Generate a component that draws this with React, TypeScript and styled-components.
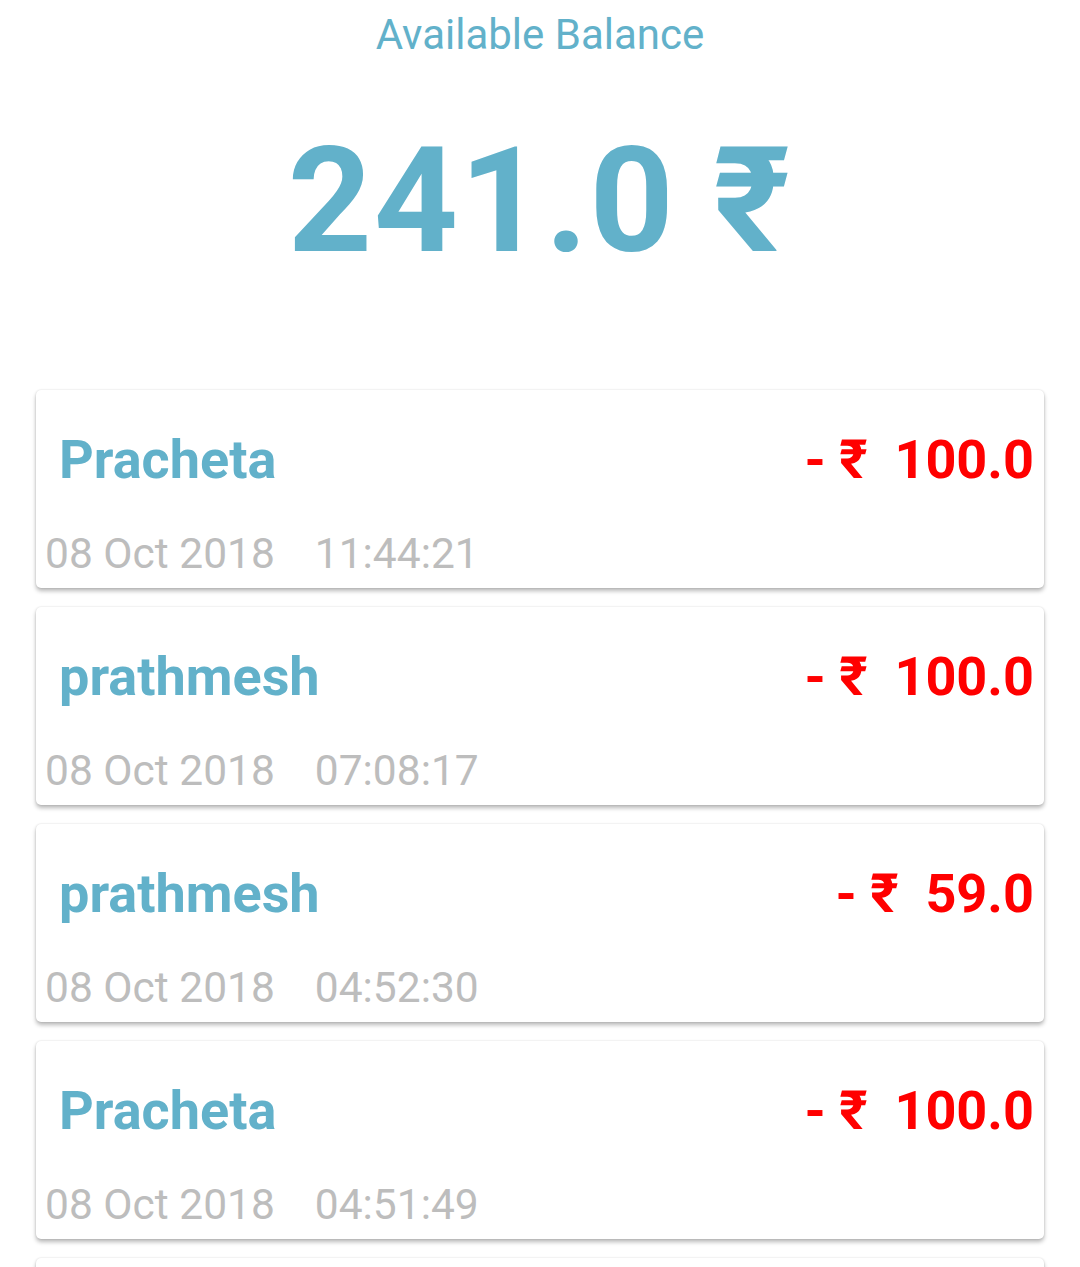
import React from "react";
import styled, { createGlobalStyle } from "styled-components";

const Global = createGlobalStyle`
  html, body { margin: 0; padding: 0; background: #ffffff; }
  body { font-family: Roboto, "Noto Sans", sans-serif; overflow: hidden; }
`;

const Page = styled.div`
  width: 1080px;
  height: 1267px;
  overflow: hidden;
  display: flex;
  flex-direction: column;
  align-items: center;
`;

const Label = styled.div`
  margin-top: 10px;
  font-size: 42px;
  color: #62b1ca;
  line-height: 50px;
`;

const Balance = styled.div`
  margin-top: 66px;
  font-size: 147px;
  font-weight: 700;
  color: #62b1ca;
  line-height: 150px;
  letter-spacing: 1.5px;
`;

const List = styled.div`
  margin-top: 114px;
  width: 1008px;
  display: flex;
  flex-direction: column;
  gap: 19px;
`;

const Card = styled.div`
  height: 198px;
  background: #fff;
  border-radius: 5px;
  box-shadow: 0 3px 4px rgba(0, 0, 0, 0.28), 0 0 2px rgba(0, 0, 0, 0.14);
  display: flex;
  flex-direction: column;
  flex-shrink: 0;
`;

const TopRow = styled.div`
  display: flex;
  justify-content: space-between;
  align-items: baseline;
  padding: 38px 10px 0 23px;
`;

const Name = styled.div`
  font-size: 54px;
  font-weight: 700;
  color: #62b1ca;
  line-height: 64px;
`;

const Amount = styled.div`
  font-size: 54px;
  font-weight: 700;
  color: #ff0000;
  line-height: 64px;
  white-space: pre;
`;

const DateRow = styled.div`
  display: flex;
  gap: 40px;
  padding: 36px 0 0 9px;
  font-size: 42.5px;
  color: #bdbdbd;
  line-height: 52px;
`;

const txs = [
  { name: "Pracheta", amount: "100.0", date: "08 Oct 2018", time: "11:44:21" },
  { name: "prathmesh", amount: "100.0", date: "08 Oct 2018", time: "07:08:17" },
  { name: "prathmesh", amount: "59.0", date: "08 Oct 2018", time: "04:52:30" },
  { name: "Pracheta", amount: "100.0", date: "08 Oct 2018", time: "04:51:49" },
  { name: "", amount: "", date: "", time: "" },
];

export default function App() {
  return (
    <Page>
      <Global />
      <Label>Available Balance</Label>
      <Balance>241.0 ₹</Balance>
      <List>
        {txs.map((t, i) => (
          <Card key={i}>
            {t.name && (
              <>
                <TopRow>
                  <Name>{t.name}</Name>
                  <Amount>{`- ₹  ${t.amount}`}</Amount>
                </TopRow>
                <DateRow>
                  <span>{t.date}</span>
                  <span>{t.time}</span>
                </DateRow>
              </>
            )}
          </Card>
        ))}
      </List>
    </Page>
  );
}
